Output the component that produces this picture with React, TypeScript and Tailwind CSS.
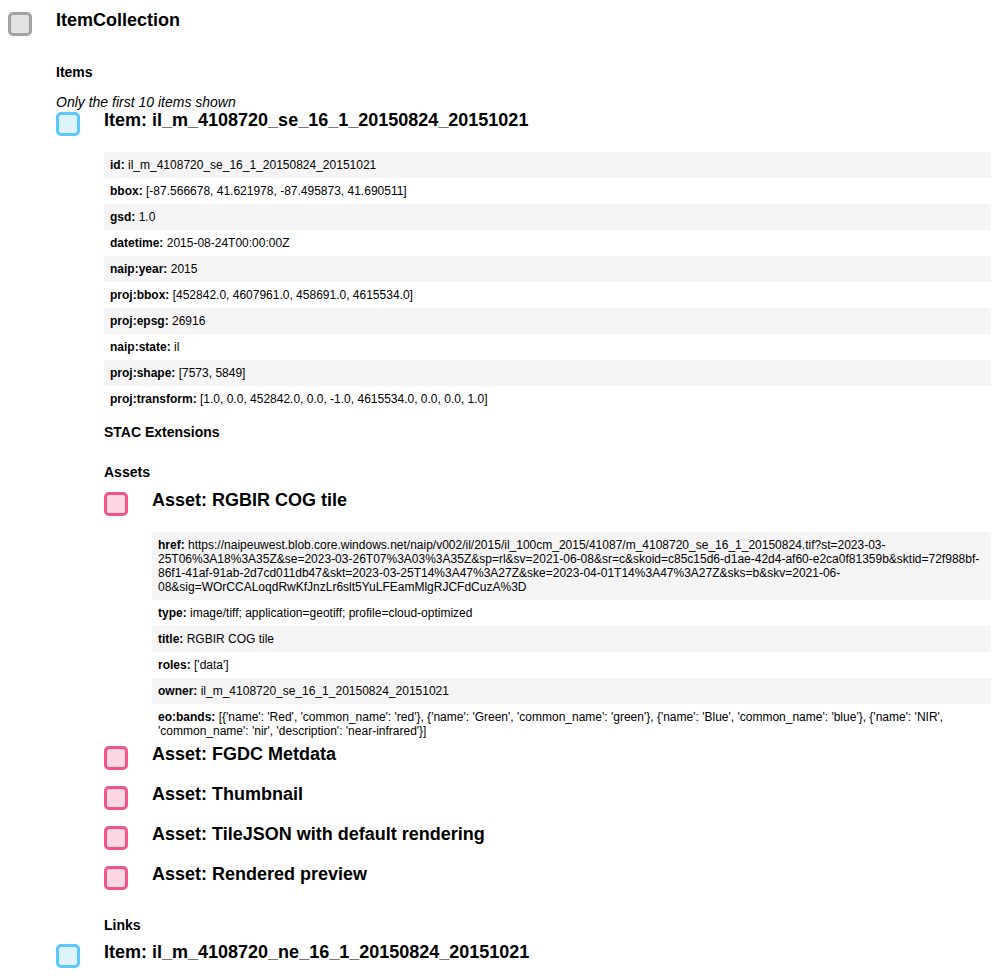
import type { ReactNode } from 'react';

type Prop = [string, string];

const itemProps: Prop[] = [
  ['id', 'il_m_4108720_se_16_1_20150824_20151021'],
  ['bbox', '[-87.566678, 41.621978, -87.495873, 41.690511]'],
  ['gsd', '1.0'],
  ['datetime', '2015-08-24T00:00:00Z'],
  ['naip:year', '2015'],
  ['proj:bbox', '[452842.0, 4607961.0, 458691.0, 4615534.0]'],
  ['proj:epsg', '26916'],
  ['naip:state', 'il'],
  ['proj:shape', '[7573, 5849]'],
  ['proj:transform', '[1.0, 0.0, 452842.0, 0.0, -1.0, 4615534.0, 0.0, 0.0, 1.0]'],
];

const assetProps: Prop[] = [
  [
    'href',
    'https://naipeuwest.blob.core.windows.net/naip/v002/il/2015/il_100cm_2015/41087/m_4108720_se_16_1_20150824.tif?st=2023-03-25T06%3A18%3A35Z&se=2023-03-26T07%3A03%3A35Z&sp=rl&sv=2021-06-08&sr=c&skoid=c85c15d6-d1ae-42d4-af60-e2ca0f81359b&sktid=72f988bf-86f1-41af-91ab-2d7cd011db47&skt=2023-03-25T14%3A47%3A27Z&ske=2023-04-01T14%3A47%3A27Z&sks=b&skv=2021-06-08&sig=WOrCCALoqdRwKfJnzLr6slt5YuLFEamMlgRJCFdCuzA%3D',
  ],
  ['type', 'image/tiff; application=geotiff; profile=cloud-optimized'],
  ['title', 'RGBIR COG tile'],
  ['roles', "['data']"],
  ['owner', 'il_m_4108720_se_16_1_20150824_20151021'],
  [
    'eo:bands',
    "[{'name': 'Red', 'common_name': 'red'}, {'name': 'Green', 'common_name': 'green'}, {'name': 'Blue', 'common_name': 'blue'}, {'name': 'NIR', 'common_name': 'nir', 'description': 'near-infrared'}]",
  ],
];

const otherAssets = ['FGDC Metdata', 'Thumbnail', 'TileJSON with default rendering', 'Rendered preview'];

const boxColors = {
  gray: 'border-[#a3a3a3] bg-[#e3e3e3]',
  blue: 'border-[#5ac8fa] bg-[#def3fd]',
  pink: 'border-[#f2558a] bg-[#fdd8e4]',
};

function Header({ color, title }: { color: keyof typeof boxColors; title: string }) {
  return (
    <div className="mb-[14px] flex h-[26px]">
      <span className={`mt-[2px] h-6 w-6 shrink-0 rounded-[5px] border-[3px] ${boxColors[color]}`} />
      <span className="ml-6 text-[18px] font-bold leading-[21px]">{title}</span>
    </div>
  );
}

function PropTable({ rows }: { rows: Prop[] }) {
  return (
    <div className="mt-[2px] flex flex-col">
      {rows.map(([k, v], i) => (
        <div
          key={k}
          className={`px-1.5 py-1.5 text-[12px] leading-[14px] ${i % 2 === 0 ? 'bg-[#f5f5f5]' : 'bg-white'}`}
        >
          <b>{k}:</b> {v}
        </div>
      ))}
    </div>
  );
}

function Label({ children, className = '' }: { children: ReactNode; className?: string }) {
  return <div className={`text-[14px] font-bold leading-4 ${className}`}>{children}</div>;
}

export default function App() {
  return (
    <div className="flex min-h-screen flex-col bg-white pl-2 pr-[3px] pt-[10px] font-['Liberation_Sans',Arial,sans-serif] text-black">
      <Header color="gray" title="ItemCollection" />
      <div className="ml-12 flex flex-col">
        <Label className="mt-[14px]">Items</Label>
        <div className="mt-[14px] text-[14px] italic leading-4">Only the first 10 items shown</div>

        <Header color="blue" title="Item: il_m_4108720_se_16_1_20150824_20151021" />
        <div className="ml-12 flex flex-col">
          <PropTable rows={itemProps} />
          <Label className="mt-3">STAC Extensions</Label>
          <Label className="mt-6">Assets</Label>
          <div className="mt-[10px] flex flex-col">
            <Header color="pink" title="Asset: RGBIR COG tile" />
            <div className="ml-12 flex flex-col">
              <PropTable rows={assetProps} />
            </div>
            {otherAssets.map((a) => (
              <Header key={a} color="pink" title={`Asset: ${a}`} />
            ))}
          </div>
          <Label className="mt-[13px]">Links</Label>
        </div>

        <div className="mt-[9px] flex flex-col">
          <Header color="blue" title="Item: il_m_4108720_ne_16_1_20150824_20151021" />
        </div>
      </div>
    </div>
  );
}
